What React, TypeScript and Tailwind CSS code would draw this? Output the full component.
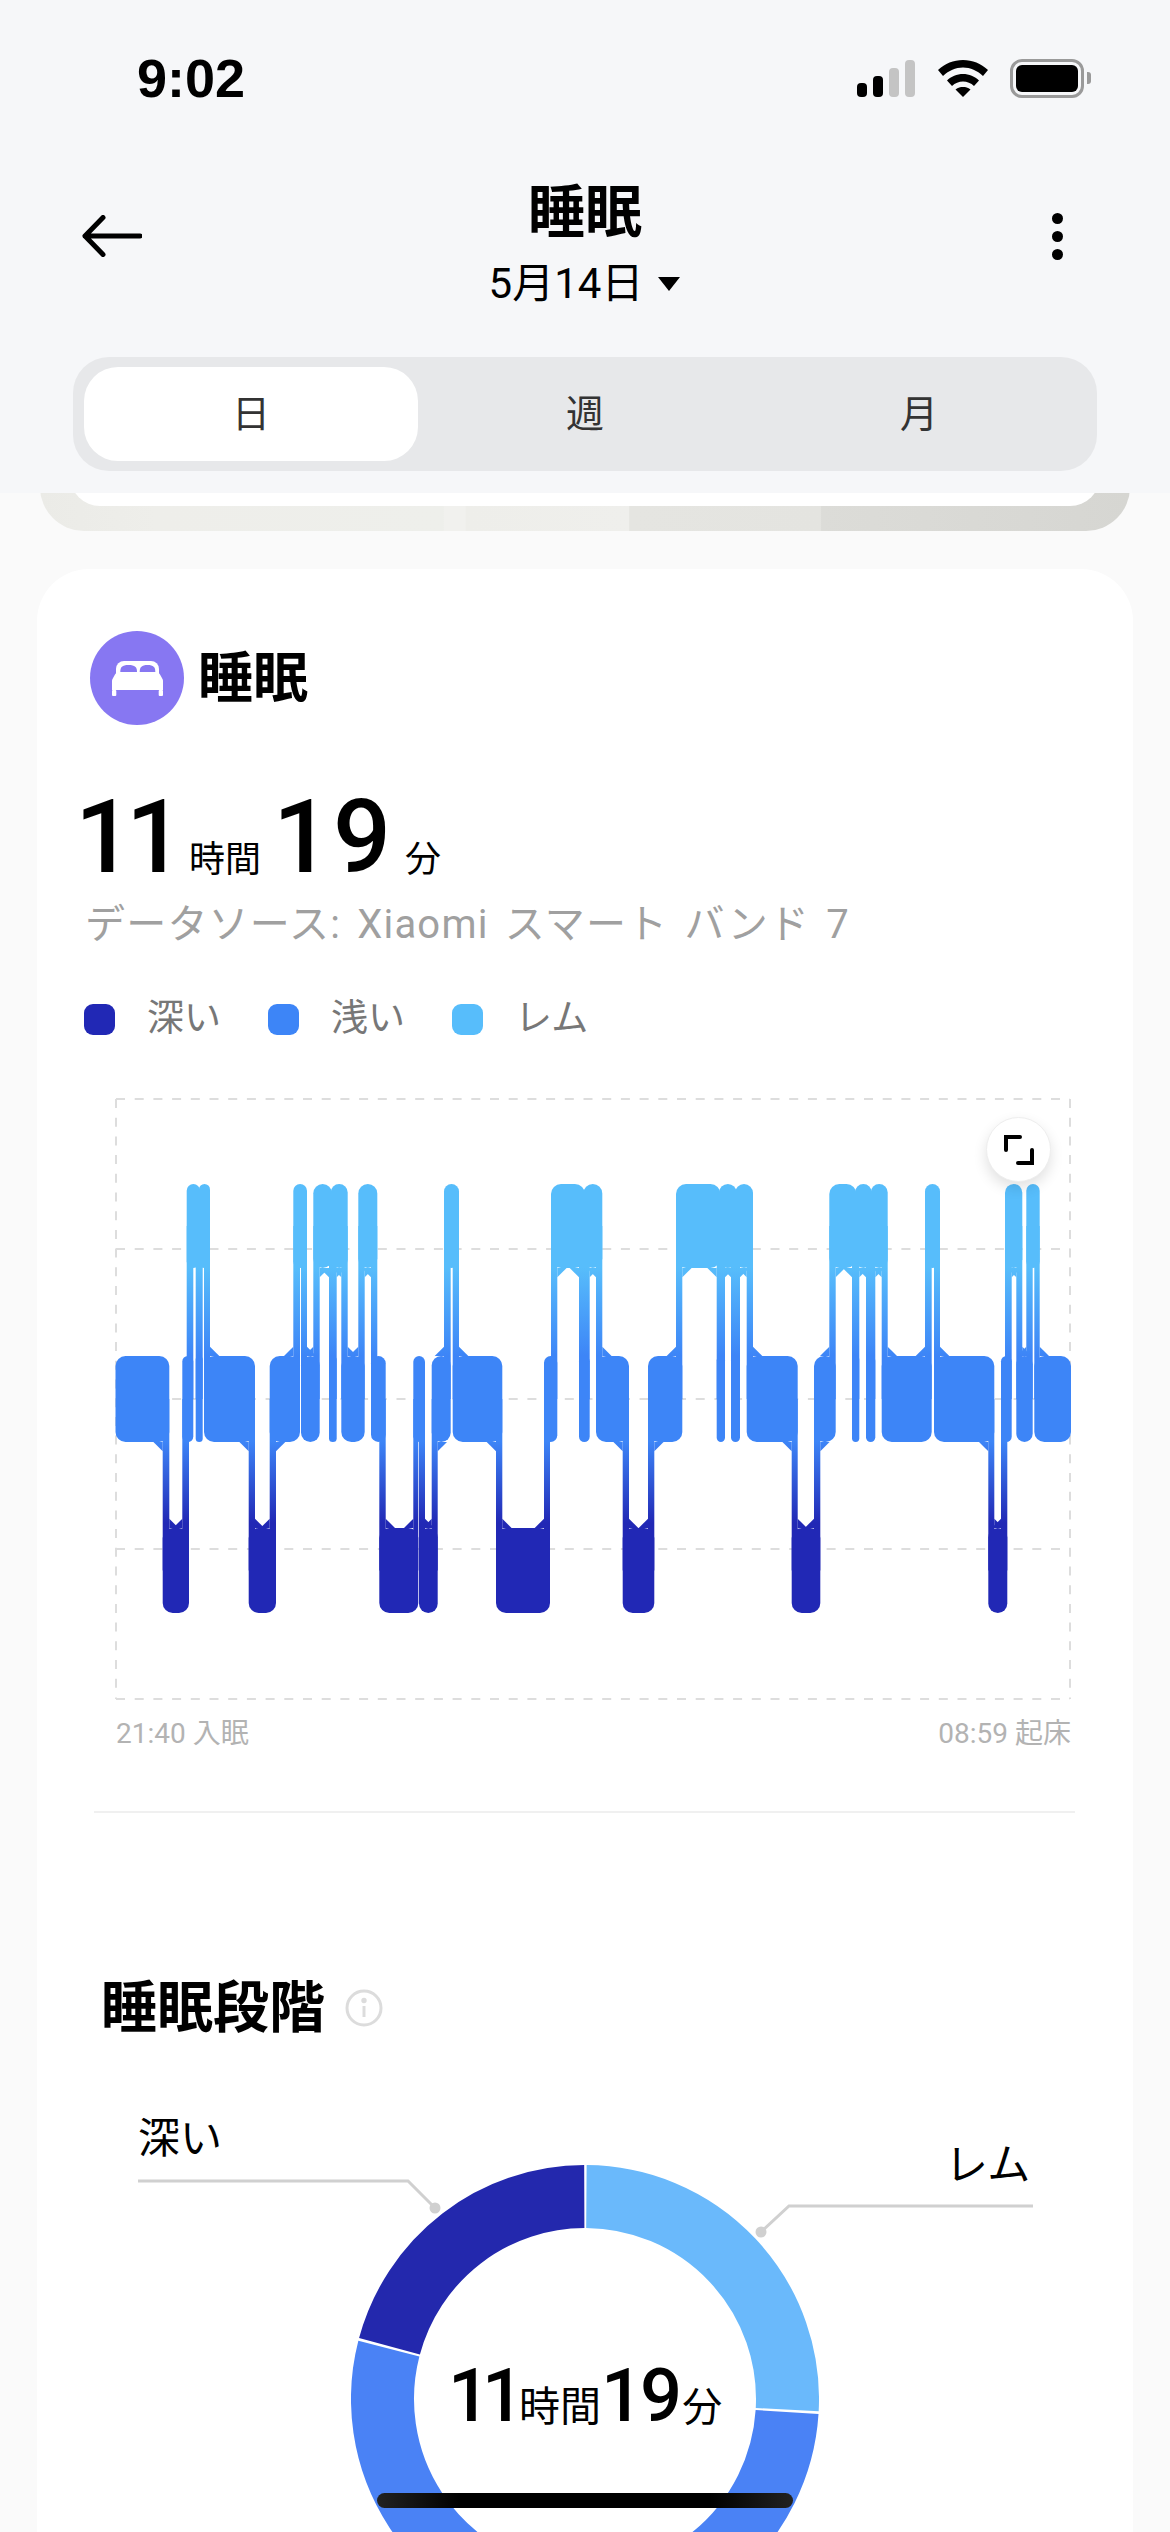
const LEVELS = {
  R: { top: 1184, bottom: 1268 },
  L: { top: 1356, bottom: 1442 },
  D: { top: 1528, bottom: 1613 },
}

type Stage = keyof typeof LEVELS

const segments: [Stage, number, number][] = [
  ['L', 115.5, 169.3], ['D', 162.7, 189], ['L', 182.3, 193.3], ['R', 186.7, 200], ['L', 195.7, 202.7],
  ['R', 199, 210], ['L', 204, 255], ['D', 248.7, 276], ['L', 269.7, 300], ['R', 293.3, 307],
  ['L', 301, 319.7], ['R', 313.3, 332], ['L', 329, 336.7], ['R', 330.7, 347.7], ['L', 341.3, 364.7],
  ['R', 358.3, 377.3], ['L', 371, 385.7], ['D', 379.3, 418.3], ['L', 413.3, 425], ['D', 419, 437.7],
  ['L', 431.7, 450.7], ['R', 444, 459], ['L', 452.7, 502.3], ['D', 496, 550], ['L', 544, 557.3],
  ['R', 551, 585], ['L', 579, 589.7], ['R', 583.3, 602.3], ['L', 596, 629], ['D', 622.7, 654.3],
  ['L', 648, 682.3], ['R', 676, 720.5], ['L', 716.7, 725], ['R', 719, 736.7], ['L', 731, 740],
  ['R', 735, 753], ['L', 746.7, 797.7], ['D', 791.7, 820.3], ['L', 814, 835.7], ['R', 829.3, 856.5],
  ['L', 852, 859.3], ['R', 855, 871.7], ['L', 866, 875.3], ['R', 870.7, 887.7], ['L', 881.7, 931.7],
  ['R', 925, 940], ['L', 934, 994.3], ['D', 988.3, 1007.3], ['L', 1001, 1011.7], ['R', 1005, 1022.3],
  ['L', 1016.3, 1032.7], ['R', 1026.3, 1039.7], ['L', 1034.3, 1071],
]

const CHAMFER = 9.3

// the corner where a connector meets a bar, cut on the diagonal
// a bar that sticks out only a little keeps its round corner instead
function chamfer(stage: Stage, other: Stage, x: number, limit: number) {
  if (Math.abs(limit - x) < 10) return ''
  const dir = limit < x ? -1 : 1
  const above = LEVELS[other].top < LEVELS[stage].top
  const y = above ? LEVELS[stage].top : LEVELS[stage].bottom
  const tip = above ? y - CHAMFER : y + CHAMFER
  return `${x},${y} ${x},${tip} ${x + dir * CHAMFER},${y}`
}

const mid = (s: Stage) => (LEVELS[s].top + LEVELS[s].bottom) / 2

function SleepChart() {
  const grid = [1099, 1249, 1399, 1549, 1699]
  return (
    <svg viewBox="114 1097 958 604" className="block w-[958px] h-[604px]">
      <defs>
        <linearGradient id="stages" gradientUnits="userSpaceOnUse" x1="0" y1="1184" x2="0" y2="1613">
          <stop offset="0.195" stopColor="#57bdfb" />
          <stop offset="0.4" stopColor="#3d85f7" />
          <stop offset="0.6" stopColor="#3d85f7" />
          <stop offset="0.79" stopColor="#2128b5" />
        </linearGradient>
      </defs>
      {grid.map((y) => (
        <line key={y} x1="116" x2="1070" y1={y} y2={y} stroke="#dddddd" strokeWidth="2" strokeDasharray="9 9.7" />
      ))}
      <line x1="116" x2="116" y1="1099" y2="1699" stroke="#dddddd" strokeWidth="2" strokeDasharray="9 9.7" />
      <line x1="1070" x2="1070" y1="1099" y2="1699" stroke="#dddddd" strokeWidth="2" strokeDasharray="9 9.7" />
      {segments.map(([stage, x0, x1], i) => {
        const w = x1 - x0
        return (
          <rect
            key={i}
            x={x0}
            y={LEVELS[stage].top}
            width={w}
            height={LEVELS[stage].bottom - LEVELS[stage].top}
            rx={Math.min(w / 2, 10)}
            fill="url(#stages)"
          />
        )
      })}
      {segments.slice(0, -1).map(([stage, x0, x1], i) => {
        const [nextStage, nx0, nx1] = segments[i + 1]
        const y0 = Math.min(mid(stage), mid(nextStage))
        const y1 = Math.max(mid(stage), mid(nextStage))
        return (
          <g key={i} fill="url(#stages)">
            <rect x={nx0} y={y0} width={x1 - nx0} height={y1 - y0} />
            <polygon points={chamfer(stage, nextStage, nx0, x0)} />
            <polygon points={chamfer(nextStage, stage, x1, nx1)} />
          </g>
        )
      })}
    </svg>
  )
}

function Donut() {
  const cx = 468
  const cy = 234
  const r = 202.5
  const arc = (from: number, to: number) => {
    const a = ((from - 90) * Math.PI) / 180
    const b = ((to - 90) * Math.PI) / 180
    const large = to - from > 180 ? 1 : 0
    return `M${cx + r * Math.cos(a)} ${cy + r * Math.sin(a)} A${r} ${r} 0 ${large} 1 ${cx + r * Math.cos(b)} ${cy + r * Math.sin(b)}`
  }
  return (
    <svg viewBox="234 0 468 468" className="block w-[468px] h-[468px]">
      <path d={arc(0.4, 93)} fill="none" stroke="#6ab9fb" strokeWidth="63" />
      <path d={arc(93.7, 284.4)} fill="none" stroke="#4a82f5" strokeWidth="63" />
      <path d={arc(285.1, 359.8)} fill="none" stroke="#2328ad" strokeWidth="63" />
    </svg>
  )
}

export default function App() {
  return (
    <div className="relative flex flex-col w-[1170px] h-[2532px] overflow-hidden bg-[#fafafa] text-black font-['Roboto','Noto_Sans_CJK_JP',sans-serif]">
      <header className="relative z-10 h-[493px] shrink-0 bg-[#f6f7f9]">
        <div className="flex items-center justify-between pt-[58px] pl-[137px] pr-[79px] h-[98px]">
          <span className="font-['Liberation_Sans',sans-serif] text-[54px] font-bold leading-[40px]">9:02</span>
          <div className="flex items-end gap-[22px]">
            <div className="flex items-end gap-[6px] mb-[1px] mr-[1px]">
              <div className="w-[10px] h-[14px] rounded-[4px] bg-black" />
              <div className="w-[10px] h-[21px] rounded-[4px] bg-black" />
              <div className="w-[10px] h-[29px] rounded-[4px] bg-[#c4c4c4]" />
              <div className="w-[10px] h-[37px] rounded-[4px] bg-[#c4c4c4]" />
            </div>
            <svg className="mb-[1px]" width="50" height="37" viewBox="0 0 50 37" fill="#000">
              <path d="M0 10 C7 3.5 15.5 0 25 0 S43 3.5 50 10 L45 16 C39 10.5 32.5 7.5 25 7.5 S11 10.5 5 16 Z" />
              <path d="M9 20.5 C13 16.5 19 14 25 14 S37 16.5 41 20.5 L36 26 C33 23 29 21.5 25 21.5 S17 23 14 26 Z" />
              <path d="M17.5 29.5 C20 27.5 22.5 27 25 27 S30 27.5 32.5 29.5 L25 37 Z" />
            </svg>
            <div className="flex items-center gap-[3px]">
              <div className="w-[74px] h-[39px] rounded-[12px] border-[3px] border-[#9a9a9a] p-[3px]">
                <div className="w-full h-full rounded-[6px] bg-black" />
              </div>
              <div className="w-[4px] h-[12px] rounded-r-[3px] bg-[#9a9a9a]" />
            </div>
          </div>
        </div>

        <div className="grid grid-cols-[1fr_auto_1fr] items-center px-[82px] mt-[85px]">
          <svg className="-mt-[19px]" width="60" height="42" viewBox="0 0 60 42" fill="none" stroke="#000" strokeWidth="5" strokeLinecap="round" strokeLinejoin="round">
            <path d="M58 21 H3 M21 2.5 L3 21 L21 39.5" />
          </svg>
          <div className="flex flex-col items-center">
            <span className="text-[57px] font-bold leading-[60px]">睡眠</span>
            <div className="flex items-center gap-[14px] mt-[17px]">
              <span className="text-[42px] leading-[48px]">5月14日</span>
              <svg width="24" height="14" viewBox="0 0 24 14">
                <path d="M1 0 H23 L12 14 Z" fill="#000" />
              </svg>
            </div>
          </div>
          <div className="flex flex-col items-end gap-[7px] -mt-[19px] pr-[25px]">
            <div className="w-[11px] h-[11px] rounded-full bg-black" />
            <div className="w-[11px] h-[11px] rounded-full bg-black" />
            <div className="w-[11px] h-[11px] rounded-full bg-black" />
          </div>
        </div>

        <div className="grid grid-cols-3 mx-[73px] mt-[49px] h-[114px] rounded-[36px] bg-[#e7e8ea] px-[11px] py-[10px] text-[38px] text-[#333]">
          <div className="flex items-center justify-center rounded-[34px] bg-white">日</div>
          <div className="flex items-center justify-center">週</div>
          <div className="flex items-center justify-center">月</div>
        </div>
      </header>

      {/* photo card scrolled mostly under the header, only its bottom edge shows */}
      <div className="shrink-0 mx-[40px] h-[80px] -mt-[42px] rounded-b-[44px] px-[30px] bg-[linear-gradient(90deg,#ebebe7_0%,#eeeeea_10.7%,#eeefeb_37%,#f1f1ee_37.1%,#f1f1ee_39%,#eeeeea_39.1%,#efefec_54%,#e5e5e1_54.1%,#e4e4e0_71.6%,#dcdcd8_71.7%,#d6d6d2_100%)]">
        <div className="h-[55px] rounded-b-[30px] bg-white" />
      </div>

      <main className="flex-1 mt-[38px] mx-[37px] rounded-t-[52px] bg-white pt-[62px]">
        <div className="flex items-center gap-[14px] pl-[53px]">
          <div className="flex items-center justify-center w-[94px] h-[94px] rounded-full bg-[#8777f2]">
            <svg width="51" height="35" viewBox="0 0 51 35" fill="#fff">
              <path d="M4 13 V8 a8 8 0 0 1 8-8 h27 a8 8 0 0 1 8 8 v5 z" />
              <path d="M8.3 11 C8.3 6 10 4 16.5 4 C23 4 25 6 25 11 z" fill="#8777f2" />
              <path d="M27.7 11 C27.7 6 29.7 4 35.5 4 C41.5 4 43.3 6 43.3 11 z" fill="#8777f2" />
              <path d="M5 12 H46 Q47.5 12 48 13.5 L50.5 18 Q51 19 51 20 V29 H0 V20 Q0 19 0.5 18 L3 13.5 Q3.5 12 5 12 z" />
              <rect x="0" y="29" width="4.3" height="6" rx="1" />
              <rect x="46.7" y="29" width="4.3" height="6" rx="1" />
            </svg>
          </div>
          <span className="text-[55px] font-bold leading-none">睡眠</span>
        </div>

        <div className="flex items-baseline pl-[38px] mt-[61px]">
          <span className="text-[102px] font-medium leading-none tracking-[-7px]">11</span>
          <span className="text-[36px] leading-none ml-[12px]">時間</span>
          <span className="text-[102px] font-medium leading-none ml-[12px] tracking-[2px]">19</span>
          <span className="text-[36px] leading-none ml-[12px]">分</span>
        </div>
        <p className="pl-[48px] mt-[13px] text-[40px] leading-[48px] text-[#a0a0a0] tracking-[1.2px] [word-spacing:5px]">データソース: Xiaomi スマート バンド 7</p>

        <div className="flex items-center pl-[47px] mt-[47px] text-[37px] leading-[46px] text-[#777]">
          <div className="w-[31px] h-[31px] rounded-[9px] bg-[#2128b5]" />
          <span className="ml-[32px]">深い</span>
          <div className="w-[31px] h-[31px] rounded-[9px] bg-[#3d85f7] ml-[47px]" />
          <span className="ml-[32px]">浅い</span>
          <div className="w-[31px] h-[31px] rounded-[9px] bg-[#57bdfb] ml-[47px]" />
          <span className="ml-[32px]">レム</span>
        </div>

        <div className="relative w-[958px] ml-[77px] mt-[55px]">
          <SleepChart />
          <button className="absolute left-[872px] top-[20px] flex items-center justify-center w-[65px] h-[65px] rounded-full bg-white border border-[#eeeeee] shadow-[0_6px_14px_rgba(0,0,0,0.12)]">
            <svg width="30" height="30" viewBox="0 0 30 30" fill="none" stroke="#000" strokeWidth="4" strokeLinecap="round">
              <path d="M2 15 V2 H16 M28 15 V28 H14" />
            </svg>
          </button>
        </div>

        <div className="flex justify-between ml-[79px] w-[955px] mt-[17px] text-[28px] leading-[32px] text-[#b3b3b3]">
          <span>21:40 入眠</span>
          <span>08:59 起床</span>
        </div>

        <div className="h-[2px] bg-[#f0f0f0] ml-[57px] w-[981px] mt-[61px]" />

        <div className="flex items-center gap-[20px] pl-[64px] mt-[165px]">
          <span className="text-[56px] font-bold leading-[60px]">睡眠段階</span>
          <svg width="38" height="38" viewBox="0 0 38 38" fill="none" stroke="#dcdcdc" strokeWidth="3">
            <circle cx="19" cy="19" r="17" />
            <path d="M19 17 V28" />
            <circle cx="19" cy="11.5" r="1.2" fill="#dcdcdc" />
          </svg>
        </div>

        <div className="relative h-[500px] mt-[45px]">
          {/* leader lines sit on their own canvas over the donut */}
          <svg className="absolute left-0 top-0 w-[1096px] h-[200px]" viewBox="0 0 1096 200" fill="none" stroke="#d0d0d0" strokeWidth="3">
            <path d="M101 98 H371 L398 125" />
            <circle cx="398" cy="125" r="5.5" fill="#d0d0d0" stroke="none" />
            <path d="M996 123 H752 L724 149" />
            <circle cx="724" cy="149" r="5.5" fill="#d0d0d0" stroke="none" />
          </svg>
          <span className="absolute left-[101px] top-[31px] text-[42px] leading-[50px]">深い</span>
          <span className="absolute left-[908px] top-[57px] text-[43px] leading-[50px]">レム</span>
          <div className="absolute left-[314px] top-[82px]">
            <Donut />
            <div className="absolute inset-0 flex items-baseline justify-center pt-[194px]">
              <span className="text-[74px] font-medium leading-none tracking-[-8px]">11</span>
              <span className="text-[41px] leading-none ml-[3px]">時間</span>
              <span className="text-[74px] font-medium leading-none tracking-[-3px]">19</span>
              <span className="text-[40px] leading-none ml-[3px]">分</span>
            </div>
          </div>
        </div>
      </main>

      <div className="absolute left-[377px] top-[2493px] w-[416px] h-[15px] rounded-full bg-[linear-gradient(90deg,#222_0%,#000_20%,#000_80%,#222_100%)]" />
    </div>
  )
}
